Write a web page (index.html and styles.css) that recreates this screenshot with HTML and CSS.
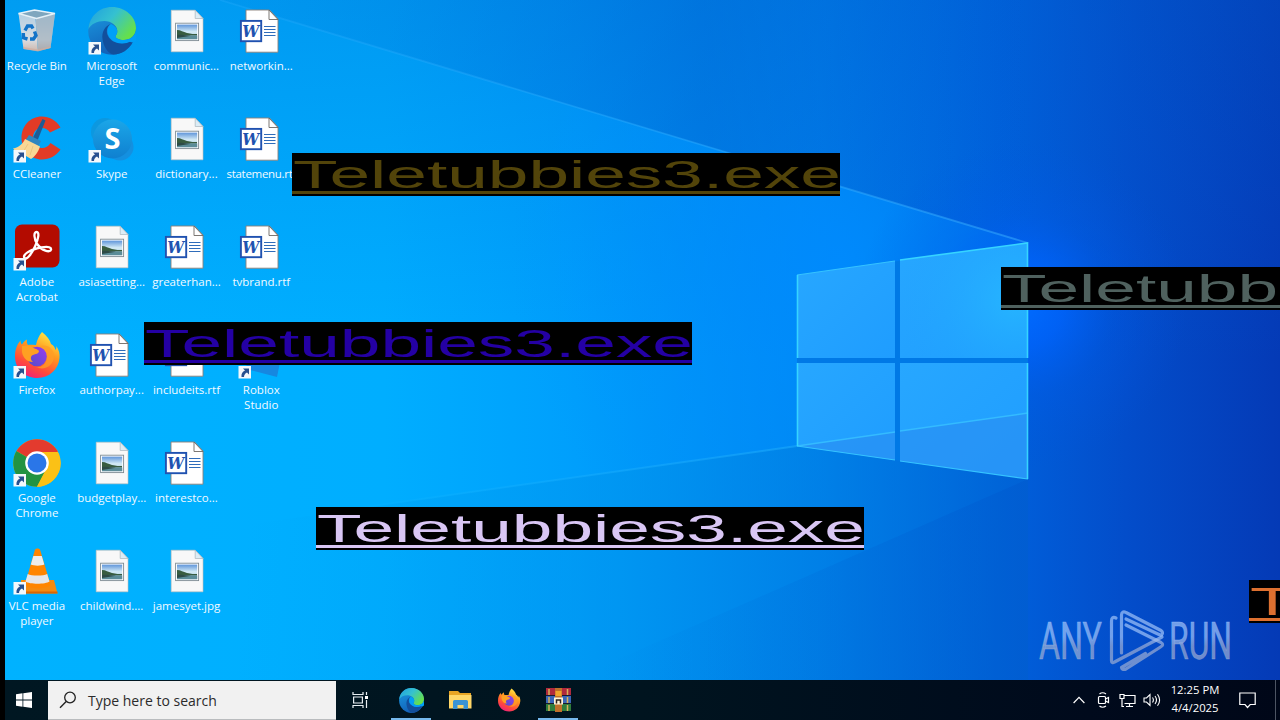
FILE: index.html
```html
<!DOCTYPE html>
<html lang="en">
<head>
  <meta charset="UTF-8" />
  <meta name="viewport" content="width=device-width, initial-scale=1.0" />
  <title>Desktop</title>
  <link rel="stylesheet" href="styles.css">
</head>
<body>
  <!-- shared icons -->
  <svg class="defs" width="0" height="0">
    <defs>
      <linearGradient id="edgeTop" x1="0" y1="0" x2="1" y2="0.6">
        <stop offset="0" stop-color="#1f9fe0"/><stop offset="0.5" stop-color="#35c1d0"/><stop offset="1" stop-color="#66e04a"/>
      </linearGradient>
      <linearGradient id="edgeMid" x1="0" y1="0" x2="0.4" y2="1">
        <stop offset="0" stop-color="#1b9de2"/><stop offset="1" stop-color="#1260b8"/>
      </linearGradient>
      <linearGradient id="foxBody" x1="0.8" y1="0" x2="0.3" y2="1">
        <stop offset="0" stop-color="#fff04a"/><stop offset="0.4" stop-color="#ff9a1f"/><stop offset="0.75" stop-color="#ff4a3a"/><stop offset="1" stop-color="#f0207a"/>
      </linearGradient>
      <linearGradient id="foxCore" x1="1" y1="0" x2="0" y2="1">
        <stop offset="0" stop-color="#9a3cf0"/><stop offset="1" stop-color="#4f4ec8"/>
      </linearGradient>
      <linearGradient id="binSide" x1="0" y1="0" x2="0" y2="1">
        <stop offset="0" stop-color="#b4cfe2"/><stop offset="0.7" stop-color="#d8dde2"/><stop offset="1" stop-color="#cfb8ae"/>
      </linearGradient>
      <linearGradient id="photoSky" x1="0" y1="0" x2="0" y2="1">
        <stop offset="0" stop-color="#5f95da"/><stop offset="0.5" stop-color="#d5ecf6"/><stop offset="1" stop-color="#8fb9cc"/>
      </linearGradient>
      <linearGradient id="skypeBg" x1="0" y1="0" x2="0" y2="1">
        <stop offset="0" stop-color="#1ba6e8"/><stop offset="1" stop-color="#0f80d0"/>
      </linearGradient>

      <symbol id="shortcut" viewBox="0 0 48 48">
        <rect x="0.5" y="35" width="12.5" height="12.5" fill="#f4f8fb"/>
        <path d="M5 37.500h6v6l-2-2c-2 1-3 2.500-3 4.500h-2.500c-.5-3 1-5.500 3.500-6.500z" fill="#27508f"/>
      </symbol>

      <symbol id="recycle" viewBox="0 0 48 48">
        <path d="M5.500 6.500l17 4.500 2.500 33-14.500-2z" fill="url(#binSide)"/>
        <path d="M22.500 11l19.500-4-4.500 34-12.500 3z" fill="url(#binSide)"/>
        <path d="M22.500 11l19.500-4-4.500 34-12.500 3z" fill="#8498a8" opacity="0.45"/>
        <path d="M5.500 6.500l16-3.500 20.500 3.500-18.500 5z" fill="#7fa6be" stroke="#e6f1f8" stroke-width="1.300"/>
        <path d="M10.500 40l14.500 2.500 12.500-3v1.500l-12.500 3.500-14.300-2.500z" fill="#d0ac9e" opacity="0.7"/>
        <g fill="none" stroke="#1374c8" stroke-width="3.400">
          <path d="M12 23.500l2.500-4.500h4l1.500 2.500"/>
          <path d="M21.500 24.500l1.500 4-2.500 3.500h-3.500"/>
          <path d="M14.500 32l-4-1.200-.2-4.800"/>
        </g>
      </symbol>

      <symbol id="edge" viewBox="0 0 48 48">
        <circle cx="24" cy="24" r="23.800" fill="url(#edgeMid)"/>
        <path d="M0.500 22C1.500 9 11.500 0 24 0c13.500 0 24 10 24 21 0 7.500-5.500 12-12 12-5.500 0-8.500-2-8.500-3.500 0-1.200 1.800-2 1.800-5.500 0-5.500-6-10-13-10C9 14 3 17 .5 22z" fill="url(#edgeTop)"/>
        <path d="M14.500 32c-1-7 2.500-13 8-15-4 3-4.500 8-2.500 12 3.500 7 14 10 23 5 1.500-.5 2.200.5 1.500 1.500-4 7-11 12-19 12C19 46 15.500 39 14.500 32z" fill="#124f9c"/>
        <path class="edge-gap" d="M23 17c-4 3-4.500 8-2.500 12 3.500 7 14 10 23 5l5.500-3v-4c-3 4-7.500 6-13 6-5.500 0-8.500-2-8.500-3.500 0-1.200 1.800-2 1.800-5.500 0-2.500-2.300-5-6.300-7z"/>
        <path d="M36 33c6.500 0 12-4.500 12-11l1 11-4.500 2.500z" class="edge-gap"/>
      </symbol>

      <symbol id="ccleaner" viewBox="0 0 48 48">
        <path d="M47.500 12.500C43 5 36 1.500 29 1.500 17 1.500 8.500 11 8.500 23c0 12 9 21.500 20.500 21.500 7.500 0 14-3.500 18.500-10l-10-6.500c-2 3.500-5 5-8.500 5-5.500 0-9-4-9-10s3.500-10 9-10c3.500 0 6 1.500 8 4.500z" fill="#e23b26"/>
        <path d="M29.500 4l3 1.500-8 20-5-2z" fill="#1c5c96"/>
        <path d="M16 20l12 6-3 6-13-6z" fill="#2f86c0"/>
        <path d="M12 24l15 7.500c-1.500 5-5 10-9 12.500l-5-3-8-2-5-5.500c6-1 10-5 12-9.500z" fill="#f8d795"/>
        <path d="M15 29l-5 8M20 31l-3 9" stroke="#ecc67f" stroke-width="1"/>
      </symbol>

      <symbol id="acrobat" viewBox="0 0 48 48">
        <rect x="2" y="1.500" width="44.500" height="43" rx="7" fill="#b30b00"/>
        <path d="M11.500 35c-2.500-3 5-8.500 16.500-10.500 8-1.400 10.500 0 10 2.200-.8 3.500-9.500.8-13.500-5.200-4-6-3.800-12.500-1-12.500 3.200 0 2 7-1.500 14.500-4 8.500-8.500 13.800-10.500 11.500z" fill="none" stroke="#fff" stroke-width="2.300"/>
      </symbol>

      <symbol id="firefox" viewBox="0 0 48 48">
        <path d="M29 1c5 4 8 8 9 12 3 1.500 4 4 4.500 6 1-1.500 1-3 .8-4C46 19 47 23 46.500 27 45.500 38.500 36 47 24.500 47 11.500 47 2 37.500 2 25.500c0-6 1.500-11.500 5.500-16 0 2 .5 3 1.500 4 2-3 3-4 5-5-.5 2 0 4.500 1 5.500 2-.5 5 0 8 0 1-5 3-9.500 6-13z" fill="url(#foxBody)"/>
        <circle cx="24" cy="25.500" r="9.800" fill="url(#foxCore)"/>
        <path d="M9 15c5-1 8-1 11 1.500 3 2 6 2 6 4-1 3-5 2.500-7 4-2 2-1 5 1 6.500-6 0-10-4-11-10z" fill="#ffa022"/>
        <path d="M27 15c5 3 7 6 7 11 0 7-6 11-11 10 8 4 18-1 18-11 0-7-6-12-14-10z" fill="#ff9d26" opacity="0.75"/>
      </symbol>

      <symbol id="chrome" viewBox="0 0 48 48">
        <circle cx="24" cy="24" r="23.800" fill="#fbc116"/>
        <path d="M24 24L3.400 12.100A23.800 23.800 0 0 1 44.600 12.100L44.700 13H24z" fill="#e33b2e"/>
        <path d="M24 24L3.400 12.100A23.800 23.800 0 0 0 24 47.800L33.500 29.500z" fill="#229342"/>
        <path d="M24 13h20.700A23.800 23.800 0 0 1 24 47.800l9.500-18.300z" fill="#fbc116"/>
        <circle cx="24" cy="24" r="11.800" fill="#fff"/>
        <circle cx="24" cy="24" r="9.500" fill="#2a76e8"/>
      </symbol>

      <symbol id="vlc" viewBox="0 0 48 48">
        <path d="M8 33h33l3.500 13.500H8z" fill="#f58a10"/>
        <path d="M8 44.500h36.500v2H8z" fill="#d96604"/>
        <path d="M22 2.500c1-1.500 4-1.500 5 0l10.500 35c-2 5-23 5-25.500 0z" fill="#ff8500"/>
        <path d="M20.300 9h8.500l2.500 8.500c-3 1.500-10.500 1.500-13.500 0z" fill="#eceded"/>
        <path d="M14.700 27c4 2 15.500 2 19.500 0l2.300 7.500c-4 3-20 3-24 0z" fill="#e6e6e8"/>
      </symbol>

      <symbol id="skype" viewBox="0 0 48 48">
        <circle cx="17" cy="17" r="14" fill="#0c98e0"/>
        <circle cx="32" cy="32" r="13.500" fill="#1490e0"/>
        <circle cx="24.500" cy="24" r="19.500" fill="url(#skypeBg)"/>
        <text x="24.500" y="34.300" class="skype-letter">S</text>
      </symbol>

      <symbol id="photo" viewBox="0 0 48 48">
        <path d="M8.200 3.200h24l7.800 8.300v33.300H8.200z" fill="#f8f8f8" stroke="#c9bdb6" stroke-width="0.600"/>
        <path d="M32.200 3.200v8.300H40z" fill="#dcecf5" stroke="#a8b4bb" stroke-width="0.700"/>
        <rect x="12.600" y="16.200" width="23" height="17.400" fill="#fff" stroke="#7d8a92" stroke-width="0.900"/>
        <rect x="14" y="17.600" width="20.200" height="14.600" fill="url(#photoSky)"/>
        <path d="M14 23c4 0 6 2 10 3s7 1 10 1v1.500H14z" fill="#385c40"/>
        <path d="M14 28.500h20.200v3.700H14z" fill="#5b8c98"/>
        <path d="M14 28c5-1 9 .5 14 .7L14 31z" fill="#2d4b46"/>
      </symbol>

      <symbol id="word" viewBox="0 0 48 48">
        <path d="M8 3h23.500l8.500 9v33.200H8z" fill="#fff" stroke="#8b8078" stroke-width="0.900"/>
        <path d="M31 3v9.500h9z" fill="#fff" stroke="#6e6964" stroke-width="0.900"/>
        <path d="M26 19.500h11.500M26 22.500h11.500M26 25.500h11.500M26 28.500h11.500" stroke="#2f6cba" stroke-width="1.100"/>
        <rect x="2.900" y="13.900" width="20.300" height="20.300" fill="#fff" stroke="#2052b0" stroke-width="1.900"/>
        <text x="12.800" y="30" class="word-letter" textLength="17" lengthAdjust="spacingAndGlyphs">W</text>
      </symbol>

      <symbol id="roblox" viewBox="0 0 48 48">
        <path d="M12 2l34 9-7 35-31-8z" fill="#1687e0"/>
      </symbol>
    </defs>
  </svg>

  <div class="screen">
    <svg class="wallpaper" viewBox="0 0 1280 720" preserveAspectRatio="none">
      <defs>
        <linearGradient id="base" x1="0" y1="0" x2="1" y2="0">
          <stop offset="0" stop-color="#00b2ff"/>
          <stop offset="0.3" stop-color="#00aeff"/>
          <stop offset="0.45" stop-color="#009ffc"/>
          <stop offset="0.64" stop-color="#0084f0"/>
          <stop offset="0.78" stop-color="#0061dc"/>
          <stop offset="0.88" stop-color="#034dca"/>
          <stop offset="1" stop-color="#043ab6"/>
        </linearGradient>
        <linearGradient id="topShade" x1="0" y1="0" x2="0" y2="1">
          <stop offset="0" stop-color="#0060cc" stop-opacity="0.26"/>
          <stop offset="0.5" stop-color="#0064dd" stop-opacity="0"/>
        </linearGradient>
        <linearGradient id="upper" gradientUnits="userSpaceOnUse" x1="220" y1="0" x2="1028" y2="0">
          <stop offset="0" stop-color="#0062cc" stop-opacity="0.06"/>
          <stop offset="0.6" stop-color="#0050c0" stop-opacity="0.3"/>
          <stop offset="1" stop-color="#0048c0" stop-opacity="0"/>
        </linearGradient>
        <radialGradient id="glow" gradientUnits="userSpaceOnUse" cx="1022" cy="305" r="165">
          <stop offset="0" stop-color="#006bff"/>
          <stop offset="0.25" stop-color="#0064ff" stop-opacity="0.75"/>
          <stop offset="0.55" stop-color="#005cf0" stop-opacity="0.3"/>
          <stop offset="1" stop-color="#0054e0" stop-opacity="0"/>
        </radialGradient>
        <radialGradient id="beamGlow" gradientUnits="userSpaceOnUse" cx="840" cy="260" r="330">
          <stop offset="0" stop-color="#008cff" stop-opacity="0.85"/>
          <stop offset="1" stop-color="#0094ff" stop-opacity="0"/>
        </radialGradient>
        <linearGradient id="lower" gradientUnits="userSpaceOnUse" x1="250" y1="500" x2="1000" y2="560">
          <stop offset="0" stop-color="#009bee" stop-opacity="0"/>
          <stop offset="0.5" stop-color="#0092ea" stop-opacity="0.5"/>
          <stop offset="1" stop-color="#0068d4" stop-opacity="0.5"/>
        </linearGradient>
        <linearGradient id="cone" gradientUnits="userSpaceOnUse" x1="600" y1="0" x2="1028" y2="0">
          <stop offset="0" stop-color="#0060d0" stop-opacity="0"/>
          <stop offset="1" stop-color="#0050c8" stop-opacity="0.55"/>
        </linearGradient>
        <linearGradient id="fadeRight" gradientUnits="userSpaceOnUse" x1="1028" y1="0" x2="1160" y2="0">
          <stop offset="0" stop-color="#0050c8" stop-opacity="0.55"/>
          <stop offset="1" stop-color="#0048c0" stop-opacity="0"/>
        </linearGradient>
        <linearGradient id="rayTop" gradientUnits="userSpaceOnUse" x1="220" y1="0" x2="1028" y2="243">
          <stop offset="0" stop-color="#30b0ff" stop-opacity="0.25"/>
          <stop offset="1" stop-color="#3cb0ff" stop-opacity="0.5"/>
        </linearGradient>
        <linearGradient id="rayBottom" gradientUnits="userSpaceOnUse" x1="330" y1="512" x2="797" y2="446">
          <stop offset="0" stop-color="#38c4ff" stop-opacity="0"/>
          <stop offset="1" stop-color="#20b0ff" stop-opacity="0.5"/>
        </linearGradient>
        <linearGradient id="pane" x1="0" y1="0" x2="1" y2="1">
          <stop offset="0" stop-color="#27a7ff"/>
          <stop offset="1" stop-color="#1f9dff"/>
        </linearGradient>
        <radialGradient id="paneLight" gradientUnits="userSpaceOnUse" cx="1015" cy="300" r="120">
          <stop offset="0" stop-color="#28c0ff" stop-opacity="0.65"/>
          <stop offset="1" stop-color="#20a4ff" stop-opacity="0"/>
        </radialGradient>
      </defs>
      <rect width="1280" height="720" fill="url(#base)"/>
      <rect width="1280" height="720" fill="url(#topShade)"/>
      <path d="M220 0L1028 243V0z" fill="url(#upper)"/>
      <path d="M220 0L1028 243L797 446L0 560V0z" fill="url(#beamGlow)"/>
      <circle cx="1022" cy="305" r="165" fill="url(#glow)"/>
      <path d="M0 560L797 446L1028 479V720H0z" fill="url(#lower)"/>
      <path d="M1028 479L480 720H1028z" fill="url(#cone)" opacity="0.5"/>
      <path d="M220 0L1028 243" stroke="url(#rayTop)" stroke-width="1.800"/>
      <path d="M797 446L330 512" stroke="url(#rayBottom)" stroke-width="2"/>
      <path d="M797 275L1028 243V479L797 446z" fill="#0079e6"/>
      <g fill="url(#pane)">
        <path d="M797 275L895 261V358H797z"/>
        <path d="M900 260L1028 243V358H900z"/>
        <path d="M797 363H895V460L797 446z"/>
        <path d="M900 363H1028V479L900 461z"/>
      </g>
      <path d="M900 260L1028 243V358H900z" fill="url(#paneLight)"/>
      <path d="M797 446L895 432V460zM900 431L1028 413V479L900 461z" fill="#2a90f4" fill-opacity="0.7"/>
      <path d="M797 446L895 432M900 431L1028 413" stroke="#34bbff" stroke-width="1.500"/>
      <path d="M797 275L895 261M797 446L895 460M900 461L1028 479" fill="none" stroke="#35c3ff" stroke-width="1.200"/>
      <path d="M900 260L1027.500 243V358M1027.500 363V479M797.500 446V363M797.500 358V275" fill="none" stroke="#36d4ff" stroke-width="1.600"/>
    </svg>

    <div class="left-edge"></div>

    <main class="desktop">
      <div class="item"><svg class="icon"><use href="#recycle"/></svg><span>Recycle Bin</span></div>
      <div class="item"><svg class="icon"><use href="#ccleaner"/><use href="#shortcut"/></svg><span>CCleaner</span></div>
      <div class="item"><svg class="icon"><use href="#acrobat"/><use href="#shortcut"/></svg><span>Adobe<br>Acrobat</span></div>
      <div class="item"><svg class="icon"><use href="#firefox"/><use href="#shortcut"/></svg><span>Firefox</span></div>
      <div class="item"><svg class="icon"><use href="#chrome"/><use href="#shortcut"/></svg><span>Google<br>Chrome</span></div>
      <div class="item"><svg class="icon"><use href="#vlc"/><use href="#shortcut"/></svg><span>VLC media<br>player</span></div>

      <div class="item"><svg class="icon"><use href="#edge"/><use href="#shortcut"/></svg><span>Microsoft<br>Edge</span></div>
      <div class="item"><svg class="icon"><use href="#skype"/><use href="#shortcut"/></svg><span>Skype</span></div>
      <div class="item"><svg class="icon"><use href="#photo"/></svg><span>asiasetting...</span></div>
      <div class="item"><svg class="icon"><use href="#word"/></svg><span>authorpay...</span></div>
      <div class="item"><svg class="icon"><use href="#photo"/></svg><span>budgetplay...</span></div>
      <div class="item"><svg class="icon"><use href="#photo"/></svg><span>childwind....</span></div>

      <div class="item"><svg class="icon"><use href="#photo"/></svg><span>communic...</span></div>
      <div class="item"><svg class="icon"><use href="#photo"/></svg><span>dictionary...</span></div>
      <div class="item"><svg class="icon"><use href="#word"/></svg><span>greaterhan...</span></div>
      <div class="item"><svg class="icon"><use href="#word"/></svg><span>includeits.rtf</span></div>
      <div class="item"><svg class="icon"><use href="#word"/></svg><span>interestco...</span></div>
      <div class="item"><svg class="icon"><use href="#photo"/></svg><span>jamesyet.jpg</span></div>

      <div class="item"><svg class="icon"><use href="#word"/></svg><span>networkin...</span></div>
      <div class="item"><svg class="icon"><use href="#word"/></svg><span class="tight">statemenu.rtf</span></div>
      <div class="item"><svg class="icon"><use href="#word"/></svg><span>tvbrand.rtf</span></div>
      <div class="item"><svg class="icon"><use href="#roblox"/><use href="#shortcut"/></svg><span>Roblox<br>Studio</span></div>
    </main>

    <!-- text drawn over the desktop -->
    <svg class="banner olive" viewBox="0 0 548 43"><text x="1" y="34.500" textLength="548" lengthAdjust="spacingAndGlyphs">Teletubbies3.exe</text><rect y="38" width="548" height="3"/></svg>
    <svg class="banner teal" viewBox="0 0 548 43"><text x="1" y="34.500" textLength="548" lengthAdjust="spacingAndGlyphs">Teletubbies3.exe</text><rect y="38" width="548" height="3"/></svg>
    <svg class="banner indigo" viewBox="0 0 548 43"><text x="1" y="34.500" textLength="548" lengthAdjust="spacingAndGlyphs">Teletubbies3.exe</text><rect y="38" width="548" height="3"/></svg>
    <svg class="banner lilac" viewBox="0 0 548 43"><text x="1" y="34.500" textLength="548" lengthAdjust="spacingAndGlyphs">Teletubbies3.exe</text><rect y="38" width="548" height="3"/></svg>
    <svg class="banner orange" viewBox="0 0 548 43"><text x="1" y="34.500" textLength="548" lengthAdjust="spacingAndGlyphs">Teletubbies3.exe</text><rect y="38" width="548" height="3"/></svg>

    <svg class="watermark" viewBox="0 0 200 64">
      <defs>
        <linearGradient id="mark" gradientUnits="userSpaceOnUse" x1="0" y1="0" x2="0" y2="64">
          <stop offset="0.45" stop-color="#9cc0f8" stop-opacity="0.72"/>
          <stop offset="0.6" stop-color="#a8b4d4" stop-opacity="0.65"/>
        </linearGradient>
      </defs>
      <g fill="url(#mark)" stroke="url(#mark)" stroke-width="0.500">
        <text x="4" y="51" textLength="63" lengthAdjust="spacingAndGlyphs">ANY</text>
        <text x="134" y="51" textLength="63" lengthAdjust="spacingAndGlyphs">RUN</text>
      </g>
      <g fill="none" stroke="url(#mark)" stroke-width="3.200" stroke-linejoin="round" stroke-linecap="round">
        <path d="M81 10c-3-1.500-4.500 0-4.500 3v40c0 2 1.500 2 3 1L127 29"/>
        <path d="M86.500 45V7c0-3 2-4 4.500-2.500l35 18c2.500 1.800 1.500 5-1 4.500L91 11"/>
        <path d="M91 17l35 17.500c2.500 1.500 2 3-.5 4.500L91 61c-2 1-4 .5-4.500-1.500l24-14"/>
      </g>
    </svg>

    <footer class="taskbar">
      <div class="start">
        <svg width="16" height="16" viewBox="0 0 16 16"><path d="M0 2.200l6.500-.9v6.300H0zM7.300 1.200L16 0v7.600H7.300zM0 8.400h6.500v6.300L0 13.800zM7.300 8.400H16V16l-8.700-1.200z" fill="#fff"/></svg>
      </div>
      <div class="search">
        <svg width="18" height="18" viewBox="0 0 18 18"><circle cx="11" cy="6.500" r="5.300" fill="none" stroke="#222" stroke-width="1.300"/><path d="M7.200 10.500L1 16.800" stroke="#222" stroke-width="1.400"/></svg>
        <span>Type here to search</span>
      </div>
      <div class="task view">
        <svg width="18" height="16" viewBox="0 0 18 16" fill="none" stroke="#e8eef2" stroke-width="1.200"><path d="M1 0v2.500h10V0M1 16v-2.500h10V16M1.600 5h8.800v6H1.600zM14.500 0v3M14.500 8v8"/><path d="M13 4h3v3h-3z" fill="#fff" stroke="none"/></svg>
      </div>
      <div class="task running"><svg width="25" height="25" viewBox="0 0 48 48"><use href="#edge"/></svg></div>
      <div class="task">
        <svg width="23" height="20" viewBox="0 0 23 20"><path d="M0 1h9l2 2h11v4H0z" fill="#e8a524"/><path d="M0 5h22.500v13.500H0z" fill="#ffd768"/><path d="M4 19v-7.500q0-1.500 1.500-1.500h12q1.500 0 1.500 1.500V19h-4.500v-4h-6v4z" fill="#3a94d4"/></svg>
      </div>
      <div class="task"><svg width="24" height="24" viewBox="0 0 48 48"><use href="#firefox"/></svg></div>
      <div class="task running">
        <svg width="25" height="24" viewBox="0 0 25 24">
          <path d="M0 0h25v8H0z" fill="#b02a3c"/><path d="M0 8h25v8H0z" fill="#3a66b8"/><path d="M0 16h25v7H0z" fill="#2f7d3c"/>
          <path d="M0 7.500h25M0 15.500h25" stroke="#1a1a2c"/>
          <path d="M3 1v6M3 9v6M3 17v6M21.500 1v6M21.500 9v6M21.500 17v6" stroke="#d7b25a" stroke-width="1.500"/>
          <path d="M9 0h7v24H9z" fill="#c0702a"/><path d="M9.500 3h6v5h-6z" fill="#f0a52c"/>
          <path d="M8 9.500h9v7H8z" fill="#fff3d6"/><path d="M10.500 15.500v-3.500h4v3.500" fill="none" stroke="#2c2018" stroke-width="1.500"/>
        </svg>
      </div>

      <div class="tray">
        <svg class="chevron" width="12" height="8" viewBox="0 0 12 8"><path d="M.6 7L6 1.400 11.400 7" fill="none" stroke="#fff" stroke-width="1.200"/></svg>
        <svg class="meet" width="13" height="16" viewBox="0 0 13 16" fill="none" stroke="#fff" stroke-width="1.200"><rect x="1.500" y="4.500" width="7" height="7" rx="1"/><path d="M8.500 7l3-1.500v5l-3-1.500M2.500 2q3-2.500 6.500 0M2.500 14q3 2.500 6.500 0"/></svg>
        <svg class="net" width="17" height="15" viewBox="0 0 17 15" fill="none" stroke="#fff" stroke-width="1.200"><path d="M5 2.500h11v8H5.500M10.500 10.500v3M7 13.500h7M1 1.500h4v4H1zM3 5.500v8h2"/></svg>
        <svg class="sound" width="18" height="14" viewBox="0 0 18 14" fill="none" stroke="#fff" stroke-width="1.100"><path d="M1 5h2.500L7 1.500v11L3.500 9H1zM9.500 4.500q1.800 2.500 0 5M12 3q3 4 0 8M14.500 1.200q4.200 5.800 0 11.600"/></svg>
        <div class="clock"><span>12:25 PM</span><span>4/4/2025</span></div>
        <svg class="notes" width="17" height="17" viewBox="0 0 17 17"><path d="M.8 1h15.400v11.500h-5L8.500 15.500 6 12.500H.8z" fill="none" stroke="#fff" stroke-width="1.200"/></svg>
      </div>
    </footer>
  </div>
</body>
</html>
```

FILE: styles.css
```css
body {
  margin: 0;
  background: #000;
  font-family: "Open Sans", "Noto Sans", sans-serif;
  overflow: hidden;
}
.defs {
  position: absolute;
}
.screen {
  position: relative;
  width: 1280px;
  height: 720px;
  overflow: hidden;
  display: flex;
  flex-direction: column;
}
.wallpaper {
  position: absolute;
  left: 0;
  top: 0;
  width: 1280px;
  height: 720px;
}
.left-edge {
  position: absolute;
  left: 0;
  top: 0;
  width: 5px;
  height: 720px;
  background: #000;
  z-index: 1;
}

/* desktop icons */
.desktop {
  position: relative;
  z-index: 2;
  flex: 1;
  display: grid;
  grid-auto-flow: column;
  grid-template-rows: repeat(6, 108px);
  grid-auto-columns: 74.8px;
  justify-content: start;
  padding-top: 7px;
}
.item {
  display: flex;
  flex-direction: column;
  align-items: center;
  gap: 3px;
}
.icon {
  width: 48px;
  height: 48px;
  flex: none;
}
.item span {
  color: #f2faff;
  font-size: 11.5px;
  line-height: 15px;
  text-align: center;
  white-space: nowrap;
  margin-left: -1px;
}
.item .tight {
  letter-spacing: -0.3px;
}
.word-letter {
  font: italic bold 16px "DejaVu Serif", serif;
  fill: #2052b0;
  text-anchor: middle;
}
.skype-letter {
  font: bold 29px "Open Sans", sans-serif;
  fill: #fff;
  text-anchor: middle;
}
.edge-gap {
  fill: #00a0f8;
}
.taskbar .edge-gap {
  fill: #001520;
}

/* stretched text */
.banner {
  position: absolute;
  z-index: 3;
  width: 548px;
  height: 43px;
  background: #000;
  font-family: "Liberation Sans", Arial, sans-serif;
  font-size: 38px;
}
.olive {
  left: 292px;
  top: 153px;
  fill: #52440a;
}
.teal {
  left: 1001px;
  top: 267px;
  fill: #4f615e;
}
.indigo {
  left: 144px;
  top: 322px;
  fill: #2400a4;
}
.lilac {
  left: 316px;
  top: 507px;
  fill: #d9c6f4;
}
.orange {
  left: 1249px;
  top: 580px;
  fill: #dd7030;
}

.watermark {
  position: absolute;
  left: 1035px;
  top: 608px;
  width: 200px;
  height: 64px;
  overflow: visible;
  font-family: Roboto, sans-serif;
  font-size: 52px;
}

/* taskbar */
.taskbar {
  position: relative;
  z-index: 2;
  height: 40px;
  margin-left: 5px;
  display: flex;
  background: linear-gradient(90deg, #001722, #00141f 50%, #000a1c 85%, #000718);
}
.start {
  width: 43px;
  display: flex;
  align-items: center;
  justify-content: center;
  padding-right: 5px;
  box-sizing: border-box;
}
.search {
  width: 288px;
  height: 39px;
  margin-top: 1px;
  box-sizing: border-box;
  display: flex;
  align-items: center;
  gap: 11px;
  padding-left: 11px;
  background: #f1f1f1;
  border-bottom: 1px solid #b9bcbe;
  color: #2b2b2b;
  font-size: 14px;
}
.task {
  width: 49px;
  display: flex;
  align-items: center;
  justify-content: center;
  position: relative;
}
.view {
  margin-right: 1.5px;
}
.running::after {
  content: "";
  position: absolute;
  left: 4px;
  bottom: 0;
  width: 40px;
  height: 2px;
  background: #76b9ed;
}
.tray {
  margin-left: auto;
  margin-right: 4px;
  padding-right: 19px;
  display: flex;
  align-items: center;
  border-right: 1px solid #4d5563;
}
.meet {
  margin-left: 12px;
}
.net {
  margin-left: 9px;
}
.sound {
  margin-left: 7px;
}
.clock {
  width: 56px;
  margin: 0 16px 0 6px;
  display: flex;
  flex-direction: column;
  align-items: center;
  color: #fff;
  font-size: 11.3px;
  line-height: 18px;
  padding-bottom: 2px;
  white-space: nowrap;
}
```
